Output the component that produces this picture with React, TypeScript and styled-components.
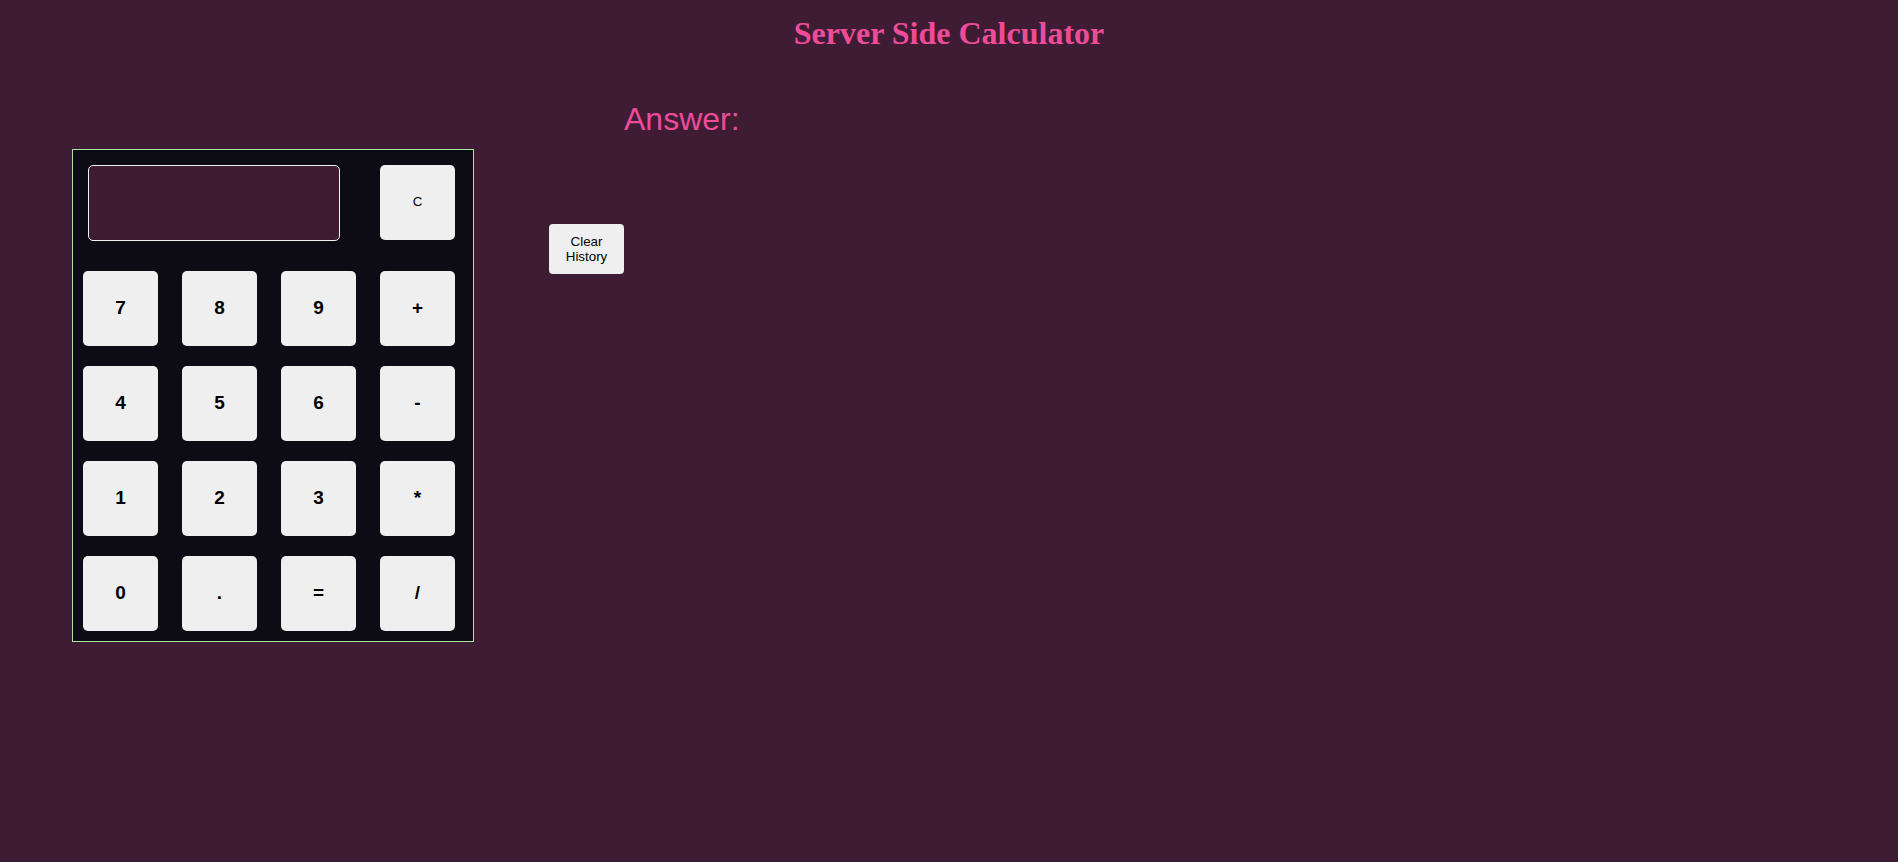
import React from "react";
import styled, { createGlobalStyle } from "styled-components";

const GlobalStyle = createGlobalStyle`
  html, body {
    margin: 0;
    padding: 0;
    background: #3e1c33;
    min-height: 100%;
  }
  body {
    font-family: "Liberation Sans", Arial, sans-serif;
    min-height: 862px;
  }
`;

const Page = styled.div`
  min-height: 862px;
  background: #3e1c33;
`;

const Title = styled.h1`
  margin: 15px 0 0;
  font-family: "Liberation Serif", "Times New Roman", serif;
  font-weight: bold;
  font-size: 32px;
  line-height: 36px;
  text-align: center;
  color: #ee4b98;
`;

const Main = styled.main`
  display: flex;
  align-items: flex-start;
  margin-top: 50px;
  padding-left: 72px;
`;

const Calculator = styled.div`
  margin-top: 48px;
  width: 402px;
  border: 1px solid #a9e3a0;
  background: #0d0b14;
  padding: 15px 18px 9px 10px;
  box-sizing: border-box;
  display: flex;
  flex-direction: column;
  height: 493px;
`;

const TopRow = styled.div`
  display: flex;
  align-items: flex-start;
`;

const Display = styled.input`
  margin: 0 0 0 5px;
  width: 252px;
  height: 76px;
  box-sizing: border-box;
  border: 1px solid #f2f2f2;
  border-radius: 5px;
  background: #3e1c33;
  color: #fff;
  font-family: "Liberation Sans", Arial, sans-serif;
  font-size: 24px;
  padding: 0 10px;
  outline: none;
`;

const Keys = styled.div`
  margin-top: 30px;
  display: grid;
  grid-template-columns: repeat(4, 75px);
  grid-auto-rows: 75px;
  column-gap: 24px;
  row-gap: 20px;
`;

const Key = styled.button<{ $small?: boolean }>`
  width: 75px;
  height: 75px;
  border: none;
  border-radius: 5px;
  background: #efefef;
  color: #000;
  font-family: "Liberation Sans", Arial, sans-serif;
  font-weight: ${(p) => (p.$small ? "normal" : "bold")};
  font-size: ${(p) => (p.$small ? "13.33px" : "19px")};
  padding: 0 0 2px;
  cursor: pointer;
`;

const ClearKey = styled(Key)`
  margin-left: auto;
  height: 75px;
`;

const Side = styled.section`
  margin-left: 75px;
  display: flex;
  flex-direction: column;
  align-items: flex-start;
`;

const Answer = styled.h2`
  margin: 0 0 0 75px;
  font-family: "Liberation Sans", Arial, sans-serif;
  font-weight: normal;
  font-size: 32px;
  line-height: 37px;
  color: #ee4b98;
`;

const HistoryButton = styled.button`
  margin-top: 86px;
  width: 75px;
  height: 50px;
  border: none;
  border-radius: 4px;
  background: #efefef;
  color: #000;
  font-family: "Liberation Sans", Arial, sans-serif;
  font-size: 13.33px;
  line-height: 15px;
  padding: 0 10px;
  cursor: pointer;
`;

const keys = ["7", "8", "9", "+", "4", "5", "6", "-", "1", "2", "3", "*", "0", ".", "=", "/"];

export default function App() {
  return (
    <Page>
      <GlobalStyle />
      <Title>Server Side Calculator</Title>
      <Main>
        <Calculator>
          <TopRow>
            <Display type="text" readOnly value="" />
            <ClearKey $small>C</ClearKey>
          </TopRow>
          <Keys>
            {keys.map((k) => (
              <Key key={k}>{k}</Key>
            ))}
          </Keys>
        </Calculator>
        <Side>
          <Answer>Answer:</Answer>
          <HistoryButton>Clear History</HistoryButton>
        </Side>
      </Main>
    </Page>
  );
}
